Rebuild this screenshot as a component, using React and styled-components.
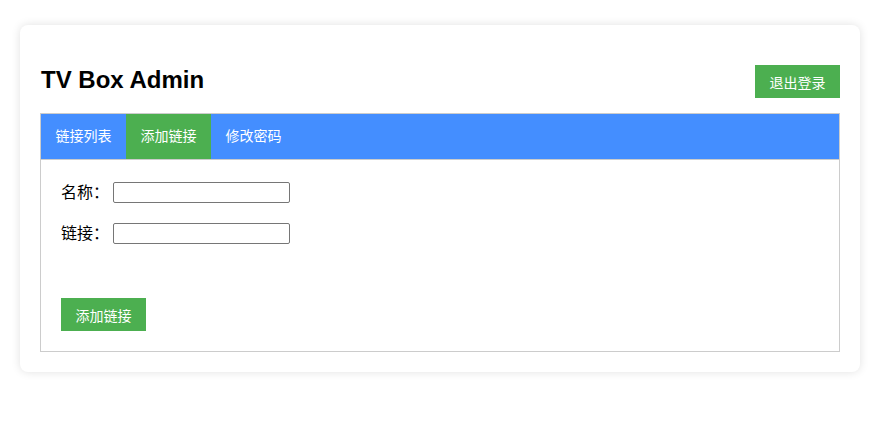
import React, { useState } from "react";
import styled, { createGlobalStyle } from "styled-components";

const GlobalStyle = createGlobalStyle`
  body {
    margin: 0;
    background: #fff;
    font-family: "Liberation Sans", Arial, "Noto Sans CJK SC", sans-serif;
    color: #000;
  }
`;

const Card = styled.div`
  width: 840px;
  box-sizing: border-box;
  margin: 25px 20px;
  padding: 0 20px 20px;
  background: #fff;
  border-radius: 8px;
  box-shadow: 0 0 10px rgba(0, 0, 0, 0.12);
`;

const Header = styled.div`
  display: flex;
  justify-content: space-between;
  align-items: flex-start;
  padding: 40px 0 15px;
`;

const Title = styled.h2`
  margin: 1px 0 0 1px;
  font-size: 24px;
  line-height: 28px;
  font-weight: bold;
`;

const Button = styled.button`
  width: 85px;
  height: 33px;
  padding: 0;
  border: none;
  background: #4caf50;
  color: #fff;
  font-family: inherit;
  font-size: 14px;
  cursor: pointer;
  margin-top: ${(props) => props.offset || 0}px;
`;

const Panel = styled.div`
  border: 1px solid #ccc;
`;

const Tabs = styled.div`
  display: flex;
  height: 45px;
  background: #448eff;
  border-bottom: 1px solid #ccc;
`;

const Tab = styled.div`
  width: 85px;
  text-align: center;
  line-height: 45px;
  font-size: 14px;
  color: #fff;
  cursor: pointer;
  background: ${(props) => (props.active ? "#4caf50" : "transparent")};
`;

const Form = styled.div`
  padding: 20px;
`;

const Row = styled.div`
  display: flex;
  align-items: center;
  height: 25px;
  margin-bottom: 16px;
`;

const Label = styled.label`
  width: 52px;
  font-size: 16px;
  line-height: 25px;
`;

const Input = styled.input`
  width: 177px;
  height: 21px;
  box-sizing: border-box;
  border: 1px solid #767676;
  border-radius: 2px;
  padding: 1px 2px;
  font-size: 13px;
`;

const tabs = ["链接列表", "添加链接", "修改密码"];

export default function App() {
  const [active, setActive] = useState(1);
  return (
    <>
      <GlobalStyle />
      <Card>
        <Header>
          <Title>TV Box Admin</Title>
          <Button>退出登录</Button>
        </Header>
        <Panel>
          <Tabs>
            {tabs.map((t, i) => (
              <Tab key={t} active={i === active} onClick={() => setActive(i)}>
                {t}
              </Tab>
            ))}
          </Tabs>
          <Form>
            <Row>
              <Label>名称：</Label>
              <Input type="text" />
            </Row>
            <Row>
              <Label>链接：</Label>
              <Input type="text" />
            </Row>
            <Button offset={36}>添加链接</Button>
          </Form>
        </Panel>
      </Card>
    </>
  );
}
